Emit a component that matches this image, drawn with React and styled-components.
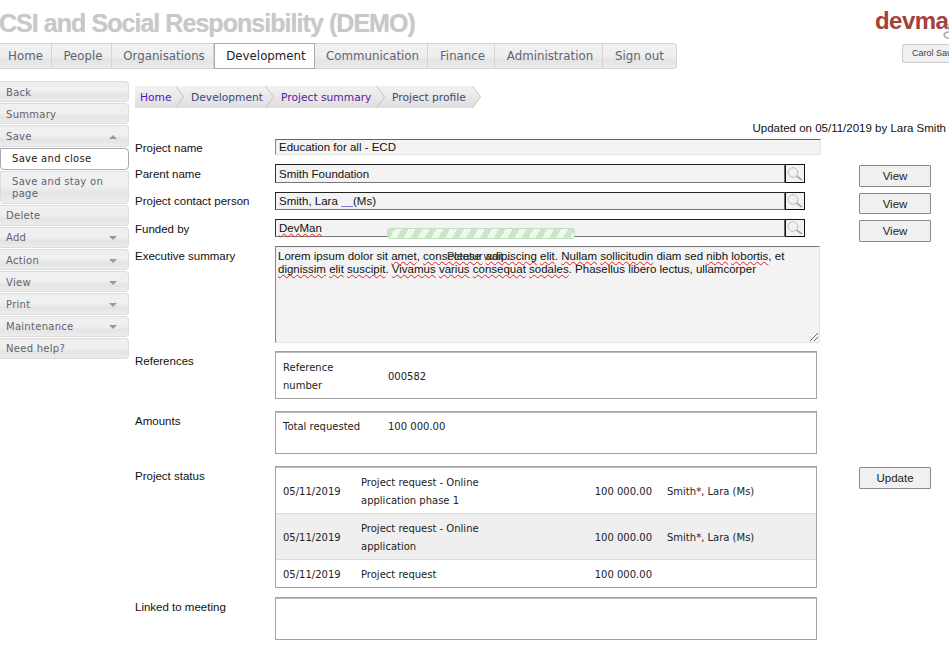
import React from 'react';
import styled, { createGlobalStyle } from 'styled-components';

const Global = createGlobalStyle`
  html, body { margin: 0; padding: 0; background: #fff; height: 648px; overflow: hidden; }
  * { box-sizing: border-box; }
`;
const verdana = `"DejaVu Sans", Verdana, sans-serif`;
const arial = `"Liberation Sans", Arial, sans-serif`;
const grad = `linear-gradient(#f0f0f0 0%, #efefef 45%, #e4e4e4 70%, #ececec 100%)`;

const Page = styled.div`width: 949px; height: 648px; overflow: hidden; position: relative;`;
const Header = styled.header`display: flex; justify-content: space-between; height: 81px;`;
const HeadLeft = styled.div`display: flex; flex-direction: column; align-items: flex-start;`;
const Title = styled.h1`
  margin: 0 0 0 -1px; height: 43px; padding-top: 8px; font: bold 25px/30px ${arial}; letter-spacing: -0.95px;
  color: #c8c8c8; white-space: nowrap; text-shadow: 0 0 1px #ddd;
`;
const Nav = styled.nav`
  display: flex; height: 26px; border: 1px solid #d3d3d3; border-left: 0; border-radius: 0 4px 4px 0; background: ${grad};
`;
const Tab = styled.a`
  display: flex; align-items: center; justify-content: center; width: ${p => p.$w}px; font: 11.8px ${verdana};
  padding-left: ${p => (p.$flush ? 0 : 3)}px;
  color: ${p => (p.$active ? '#222' : '#5e6470')}; border-right: 1px solid #d3d3d3;
  ${p => p.$active && 'background:#fff; outline:1px solid #aaa; outline-offset:-1px; height:26px; margin-top:-1px; border:0;'}
  ${p => p.$last && 'border-right:0;'}
`;
const HeadRight = styled.div`width: 74px; overflow: hidden; flex: none; position: relative;`;
const Logo = styled.div`
  height: 44px; padding: 9px 0 0 0; font: bold 24px/24px ${arial}; letter-spacing: -0.55px; color: #a5403a; white-space: nowrap;
`;
const Swirl = styled.svg`position: absolute; right: 0; top: 23px;`;
const UserBtn = styled.div`
  margin-left: 27px; width: 47px; height: 19px; border: 1px solid #ccc; border-right: 0; border-radius: 3px 0 0 3px; background: #f1f1f1;
  font: 9px/17px ${arial}; color: #444; padding-left: 9px; white-space: nowrap; overflow: hidden;
`;

const Body = styled.div`display: flex; align-items: flex-start;`;
const Side = styled.aside`width: 129px; flex: none; display: flex; flex-direction: column; gap: 1px;`;
const SideItem = styled.div`
  display: flex; justify-content: space-between; align-items: center; height: ${p => p.$h || 21.2}px; padding: 2px 11px 0 6px;
  border: 1px solid #dcdcdc; border-left: 0; border-radius: 0 4px 4px 0; background: ${grad};
  font: 10px/12px ${verdana}; letter-spacing: 0.28px; color: #5e6470;
`;
const SubItem = styled(SideItem)`
  padding-left: 11px; border-left: 1px solid #dcdcdc; border-radius: 0 0 4px 4px; align-items: flex-start; padding-top: 4px;
  ${p => p.$active && 'background:#fff; color:#222; border-color:#aaa; border-radius:0 4px 4px 4px; align-items:center; padding-top:1px;'}
`;
const Caret = styled.span`
  width: 0; height: 0; border-left: 4px solid transparent; border-right: 4px solid transparent;
  ${p => (p.$up ? 'border-bottom:4px solid #999;' : 'border-top:4px solid #999;')}
`;

const Main = styled.main`flex: 1; min-width: 0; padding-left: 6px; position: relative;`;
const Crumbs = styled.div`display: flex; height: 22px; margin-top: 5px;`;
const Crumb = styled.a`
  position: relative; display: flex; align-items: center; height: 22px; padding-left: ${p => (p.$first ? 5 : 16)}px; width: ${p => p.$w}px;
  font: 10.7px ${verdana}; color: ${p => p.$c}; background: linear-gradient(#f3f3f3, #dedede); white-space: nowrap;
  &::before {
    content: ''; position: absolute; right: -9px; top: 0; width: 9px; height: 22px; background: #c4c4c4;
    clip-path: polygon(0 0, 1px 0, 100% 50%, 1px 100%, 0 100%); z-index: 1;
  }
  &::after {
    content: ''; position: absolute; right: -8px; top: 0; width: 8px; height: 22px; background: linear-gradient(#f3f3f3,#dedede);
    clip-path: polygon(0 0, 100% 50%, 0 100%); z-index: 1;
  }
`;
const Updated = styled.div`
  font: 11.5px/14px ${arial}; color: #111; text-align: right; padding-right: 3px; margin-top: 13px; height: 18px;
`;

const Row = styled.div`
  display: grid; grid-template-columns: 140px 546px 38px 72px; align-items: start;
  height: ${p => p.$h}px; margin-bottom: ${p => p.$mb ?? 9}px;
`;
const Label = styled.label`
  font: 11.5px/14px ${arial}; color: #111; padding-top: ${p => p.$pt ?? 3}px;
`;
const NameInput = styled.div`
  height: 16px; grid-column: 2; width: 546px; background: #f3f3f3; border: 1px solid; border-color: #666 #e4e4e4 #e4e4e4 #888;
  font: 11.5px/14px ${arial}; color: #111; padding-left: 3px;
`;
const Lookup = styled.div`display: flex; width: 530px; height: ${p => p.$h || 18}px;`;
const LookupField = styled.div`
  flex: 1; background: #f3f3f3; border: 1px solid #222; border-right-color: #666; border-bottom-color: #777; border-left-color: #333;
  font: 11.5px/${p => p.$lh || 18}px ${arial}; color: #111; padding-left: 3px; white-space: ${p => p.$wrap ? 'normal' : 'pre'};
`;
const BlueGap = styled.span`
  display: inline-block; width: 12px; height: 1px; vertical-align: -2px; background: #7a7ae0;
`;
const LookupBtn = styled.div`
  width: 20px; background: #f2f2f2; border: 1px solid #111; display: flex; align-items: center; justify-content: center;
`;
const Btn = styled.button`
  grid-column: 4; width: 72px; height: ${p => p.$h || 22}px; margin-top: 1px; padding: 0; background: #f0f0f0; border: 1px solid #8a8a8a; border-radius: 1px;
  font: 11.5px ${arial}; color: #222;
`;
const Squig = styled.span`
  text-decoration: underline wavy #e02020 1.2px; text-underline-offset: 1px; text-decoration-skip-ink: none;
`;
const Summary = styled.div`
  position: relative; width: 545px; height: 97px; background: #f3f3f3; border: 1px solid; border-color: #777 #e4e4e4 #e4e4e4 #888;
  font: 11.5px/13px ${arial}; color: #111; padding: 3px 2px 0 2px;
`;
const Grip = styled.svg`position: absolute; right: 0; bottom: 0;`;
const Box = styled.div`
  width: 542px; height: ${p => p.$h}px; border: 1px solid #a3a3a3; box-shadow: inset 0 1px 0 #bbb;
  font: 10px/18px ${verdana}; color: #222;
`;
const RefRow = styled.div`display: grid; grid-template-columns: 105px 1fr; padding: ${p => p.$pt}px 7px 0; align-items: center;`;
const RefName = styled.span`padding-right: 30px;`;
const StatusRow = styled.div`
  display: grid; grid-template-columns: 78px 165px 126px 150px; align-items: center; padding: ${p => p.$pt ?? 2}px 0 0 7px;
  height: ${p => p.$h}px; background: ${p => (p.$alt ? '#efefef' : 'transparent')};
  ${p => p.$line && 'border-bottom:1px solid #dcdcdc;'}
`;
const Amount = styled.span`text-align: right;`;
const Person = styled.span`padding-left: 15px;`;
const Overlay = styled.div`
  position: absolute; left: 258px; top: 147px; width: 188px; height: 11px; border: 1px solid #bfe0bf; border-radius: 3px;
  background: repeating-linear-gradient(120deg, #c9e6c9 0 6px, #eef8ee 6px 12px);
`;
const Wait = styled.div`position: absolute; left: 318px; top: 168px; font: 11px/14px ${arial}; color: #333;`;

const Magnifier = () => (
  <svg width="16" height="14" viewBox="0 0 16 14" fill="none">
    <circle cx="6" cy="5.5" r="4.8" stroke="#bdbdbd" strokeWidth="1" />
    <path d="M9.5 9 15 13" stroke="#aaa" strokeWidth="1.6" />
  </svg>
);

const tabs = [['Home', 52, 0, 1], ['People', 60], ['Organisations', 102], ['Development', 101, 1], ['Communication', 113], ['Finance', 67], ['Administration', 108]];
const sideTop = ['Back', 'Summary'];
const sideBottom = [['Delete'], ['Add', 1], ['Action', 1], ['View', 1], ['Print', 1], ['Maintenance', 1], ['Need help?']];

export default function App() {
  return (
    <Page>
      <Global />
      <Header>
        <HeadLeft>
          <Title>CSI and Social Responsibility (DEMO)</Title>
          <Nav>
            {tabs.map(([t, w, a, f]) => <Tab key={t} $w={w} $active={!!a} $flush={!!f}>{t}</Tab>)}
            <Tab $w={73} $last $flush>Sign out</Tab>
          </Nav>
        </HeadLeft>
        <HeadRight>
          <Logo>devman</Logo>
          <Swirl width="6" height="16" viewBox="0 0 6 16" fill="none">
            <path d="M5 1 C3 4 6 6 6 7 M6 9 C2 9 0 11 2 14 C3 15 5 15 6 15" stroke="#a9a9a9" strokeWidth="1.6" />
          </Swirl>
          <UserBtn>Carol Saunders</UserBtn>
        </HeadRight>
      </Header>
      <Body>
        <Side>
          {sideTop.map(t => <SideItem key={t}>{t}</SideItem>)}
          <SideItem>Save<Caret $up /></SideItem>
          <SubItem $active $h={22}>Save and close</SubItem>
          <SubItem $h={33}>Save and stay on page</SubItem>
          {sideBottom.map(([t, c]) => <SideItem key={t}>{t}{c && <Caret />}</SideItem>)}
        </Side>
        <Main>
          <Crumbs>
            <Crumb $first $w={40} $c="#5a10c8">Home</Crumb>
            <Crumb $w={90} $c="#3b4a78">Development</Crumb>
            <Crumb $w={111} $c="#5a1a9a">Project summary</Crumb>
            <Crumb $w={96} $c="#3b4a78">Project profile</Crumb>
          </Crumbs>
          <Updated>Updated on 05/11/2019 by Lara Smith</Updated>
          <Row $h={16}>
            <Label $pt={2}>Project name</Label>
            <NameInput>Education for all - ECD</NameInput>
          </Row>
          <Row $h={19}>
            <Label>Parent name</Label>
            <Lookup $h={19}><LookupField>Smith Foundation</LookupField><LookupBtn><Magnifier /></LookupBtn></Lookup>
            <Btn>View</Btn>
          </Row>
          <Row $h={18}>
            <Label $pt={2}>Project contact person</Label>
            <Lookup><LookupField $lh={16}>Smith, Lara <BlueGap />(Ms)</LookupField><LookupBtn><Magnifier /></LookupBtn></Lookup>
            <Btn $h={21}>View</Btn>
          </Row>
          <Row $h={18}>
            <Label>Funded by</Label>
            <Lookup><LookupField $lh={17} $wrap><Squig>DevMan</Squig></LookupField><LookupBtn><Magnifier /></LookupBtn></Lookup>
            <Btn>View</Btn>
          </Row>
          <Row $h={97} $mb={8}>
            <Label>Executive summary</Label>
            <Summary>
              Lorem ipsum dolor sit <Squig>amet</Squig>, <Squig>consectetur</Squig> <Squig>adipiscing</Squig> <Squig>elit</Squig>. <Squig>Nullam</Squig> <Squig>sollicitudin</Squig> diam sed <Squig>nibh</Squig> <Squig>lobortis</Squig>, et <Squig>dignissim</Squig> <Squig>elit</Squig> <Squig>suscipit</Squig>. <Squig>Vivamus</Squig> <Squig>varius</Squig> <Squig>consequat</Squig> <Squig>sodales</Squig>. Phasellus libero lectus, ullamcorper
              <Grip width="12" height="12" viewBox="0 0 12 12"><path d="M3 11 11 3M7 11 11 7" stroke="#666" strokeWidth="1" /></Grip>
            </Summary>
          </Row>
          <Row $h={48} $mb={12}>
            <Label>References</Label>
            <Box $h={48}>
              <RefRow $pt={7}><RefName>Reference number</RefName><span>000582</span></RefRow>
            </Box>
          </Row>
          <Row $h={43} $mb={12}>
            <Label>Amounts</Label>
            <Box $h={43}>
              <RefRow $pt={6}><span>Total requested</span><span>100 000.00</span></RefRow>
            </Box>
          </Row>
          <Row $h={122}>
            <Label>Project status</Label>
            <Box $h={122}>
              <StatusRow $h={47} $pt={3} $line><span>05/11/2019</span><span>Project request - Online application phase 1</span><Amount>100 000.00</Amount><Person>Smith*, Lara (Ms)</Person></StatusRow>
              <StatusRow $h={46} $alt $line><span>05/11/2019</span><span>Project request - Online application</span><Amount>100 000.00</Amount><Person>Smith*, Lara (Ms)</Person></StatusRow>
              <StatusRow $h={27}><span>05/11/2019</span><span>Project request</span><Amount>100 000.00</Amount><Person /></StatusRow>
            </Box>
            <Btn>Update</Btn>
          </Row>
          <Row $h={43} $mb={0}>
            <Label>Linked to meeting</Label>
            <Box $h={43} />
          </Row>
          <Overlay />
          <Wait>Please wait...</Wait>
        </Main>
      </Body>
    </Page>
  );
}
